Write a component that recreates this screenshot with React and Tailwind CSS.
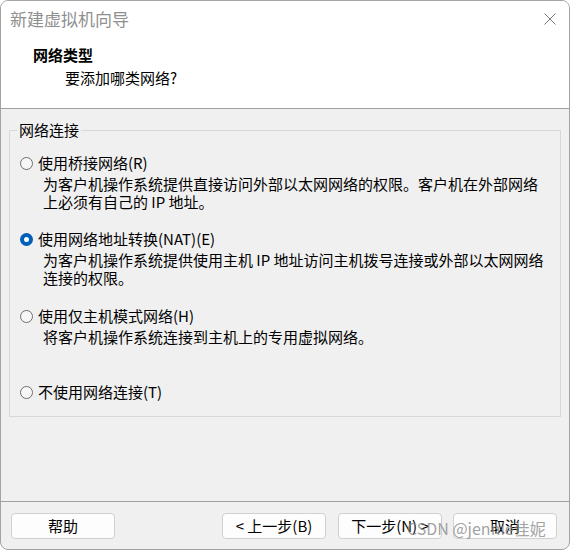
import { useState } from "react";

const FONT = { fontFamily: '"Noto Sans CJK SC", "Noto Sans", sans-serif' };

// ========== RADIO ==========
function Radio({ checked }) {
  return checked ? (
    <span className="w-[13px] h-[13px] rounded-full bg-[#005fb8] flex items-center justify-center shrink-0">
      <span className="w-[5px] h-[5px] rounded-full bg-white" />
    </span>
  ) : (
    <span className="w-[13px] h-[13px] rounded-full border border-[#6e6e6e] bg-[#f7f7f7] shrink-0" />
  );
}

function Option({ label, lines, checked, onClick, className }) {
  return (
    <div className={className}>
      <div
        onClick={onClick}
        className="flex items-center h-[20px] pl-[3px] cursor-default"
      >
        <Radio checked={checked} />
        <span className="ml-[5px] text-[15px] leading-[20px]">{label}</span>
      </div>
      {lines.length > 0 && (
        <div className="mt-[2px] pl-[26px] text-[15px] leading-[18px]">
          {lines.map((l) => (
            <div key={l}>{l}</div>
          ))}
        </div>
      )}
    </div>
  );
}

// ========== BUTTON ==========
function Btn({ children }) {
  return (
    <button className="w-[104px] h-[26px] bg-[#fdfdfd] border border-[#d0d0d0] rounded-[4px] text-[15px] leading-[20px] text-black">
      {children}
    </button>
  );
}

export default function App() {
  const [net, setNet] = useState("nat");

  return (
    <div className="w-[570px] h-[550px] bg-white" style={FONT}>
      <div className="relative w-[570px] h-[550px] flex flex-col bg-[#f0f0f0] border border-[#a3a3a3] rounded-[8px] overflow-hidden text-black">
        {/* TITLE BAR */}
        <div className="bg-white h-[35px] flex items-center justify-between pl-[9px] pr-[13px]">
          <span className="text-[17px] leading-[22px] text-[#8f8f8f]">新建虚拟机向导</span>
          <svg width="12" height="12" viewBox="0 0 12 12">
            <path d="M0.5 0.5 L11.5 11.5 M11.5 0.5 L0.5 11.5" stroke="#7a7a7a" strokeWidth="1" />
          </svg>
        </div>

        {/* HEADER */}
        <div className="bg-white border-b border-[#a0a0a0] pt-[9px] pb-[20px] h-[73px]">
          <div className="pl-[32px] text-[15px] leading-[20px] font-bold">网络类型</div>
          <div className="pl-[64px] mt-[3px] text-[15px] leading-[20px]">要添加哪类网络?</div>
        </div>

        {/* GROUP */}
        <div className="flex-1 px-[8px]">
          <fieldset className="mt-[11px] border border-[#d8d8d8] px-[7px] pb-[14px]">
            <legend className="px-[2px] text-[15px] leading-[20px]">网络连接</legend>
            <Option
              className="mt-[13px]"
              label="使用桥接网络(R)"
              checked={net === "bridge"}
              onClick={() => setNet("bridge")}
              lines={[
                "为客户机操作系统提供直接访问外部以太网网络的权限。客户机在外部网络",
                "上必须有自己的 IP 地址。",
              ]}
            />
            <Option
              className="mt-[18px]"
              label="使用网络地址转换(NAT)(E)"
              checked={net === "nat"}
              onClick={() => setNet("nat")}
              lines={[
                "为客户机操作系统提供使用主机 IP 地址访问主机拨号连接或外部以太网网络",
                "连接的权限。",
              ]}
            />
            <Option
              className="mt-[19px]"
              label="使用仅主机模式网络(H)"
              checked={net === "host"}
              onClick={() => setNet("host")}
              lines={["将客户机操作系统连接到主机上的专用虚拟网络。"]}
            />
            <Option
              className="mt-[36px]"
              label="不使用网络连接(T)"
              checked={net === "none"}
              onClick={() => setNet("none")}
              lines={[]}
            />
          </fieldset>
        </div>

        {/* FOOTER */}
        <div className="border-t border-[#a0a0a0] h-[48px] pt-[11px] pl-[10px] pr-[12px] flex items-start">
          <Btn>帮助</Btn>
          <div className="flex-1" />
          <Btn>&lt; 上一步(B)</Btn>
          <div className="w-[12px]" />
          <Btn>下一步(N) &gt;</Btn>
          <div className="w-[11px]" />
          <Btn>取消</Btn>
        </div>

        {/* WATERMARK */}
        <div className="absolute left-[406px] top-[516px] text-[16px] leading-[22px] text-[#8a8a8a]/80 pointer-events-none">
          CSDN @jennie佳妮
        </div>
      </div>
    </div>
  );
}
